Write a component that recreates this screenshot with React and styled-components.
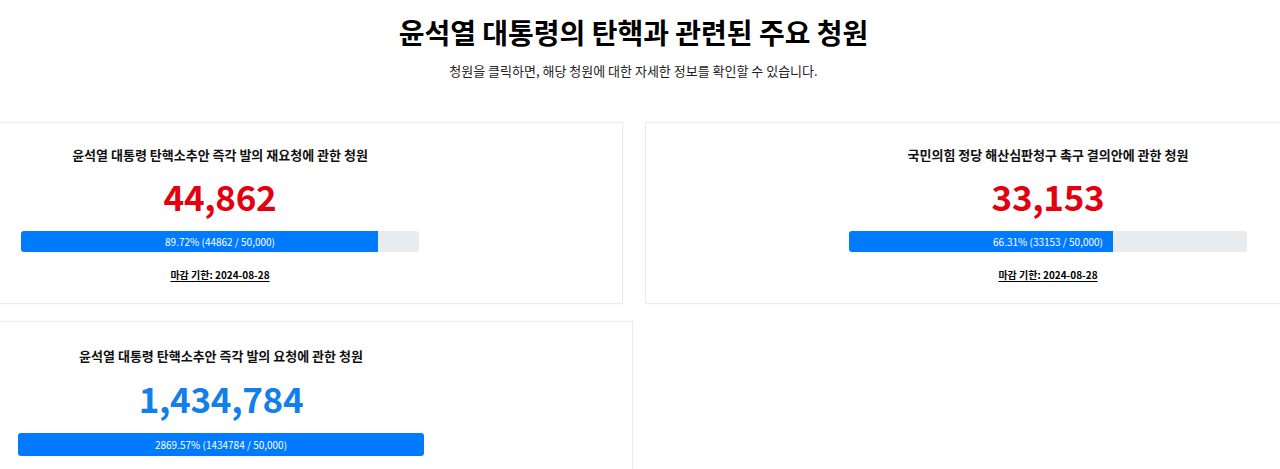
import React from 'react'
import styled, { createGlobalStyle } from 'styled-components'

const GOAL = 50000

const petitions = [
    { id: 1, title: '윤석열 대통령 탄핵소추안 즉각 발의 재요청에 관한 청원', count: 44862, deadline: '2024-08-28' },
    { id: 2, title: '국민의힘 정당 해산심판청구 촉구 결의안에 관한 청원', count: 33153, deadline: '2024-08-28' },
    { id: 3, title: '윤석열 대통령 탄핵소추안 즉각 발의 요청에 관한 청원', count: 1434784, deadline: '2024-08-14', wide: true },
]

const GlobalStyle = createGlobalStyle`
    body{
        margin: 0;
        background: #fff;
        overflow: hidden;
        font-family: "Noto Sans CJK KR", "Noto Sans", sans-serif;
        color: #111;
    }
`

function App() {
    return (
        <>
            <GlobalStyle />
            <PageStyled>
                <Header>
                    <h1>윤석열 대통령의 탄핵과 관련된 주요 청원</h1>
                    <p>청원을 클릭하면, 해당 청원에 대한 자세한 정보를 확인할 수 있습니다.</p>
                </Header>
                <CardGrid>
                    {petitions.map((p) => {
                        const percent = (p.count / GOAL) * 100
                        return (
                            <Card key={p.id} $wide={p.wide}>
                                <CardTitle>{p.title}</CardTitle>
                                <Count $done={p.count >= GOAL} $wide={p.wide}>
                                    {p.count.toLocaleString('en-US')}
                                </Count>
                                <Track $wide={p.wide}>
                                    <Fill style={{ width: `${Math.min(percent, 100)}%` }} />
                                    <Label>
                                        {percent.toFixed(2)}% ({p.count} / {GOAL.toLocaleString('en-US')})
                                    </Label>
                                </Track>
                                <Deadline href="#">마감 기한: {p.deadline}</Deadline>
                            </Card>
                        )
                    })}
                </CardGrid>
            </PageStyled>
        </>
    )
}

const PageStyled = styled.div`
    width: 1633px;
    margin-left: -183px;
`

const Header = styled.header`
    text-align: center;
    padding-top: 14px;
    h1{
        margin: 0;
        font-size: 28px;
        line-height: 36px;
        font-weight: 700;
        color: #000;
    }
    p{
        margin: 12px 0 0;
        font-size: 13px;
        line-height: 18px;
        color: #222;
    }
`

const CardGrid = styled.div`
    display: grid;
    grid-template-columns: 806px 806px;
    column-gap: 22px;
    row-gap: 17px;
    margin-top: 42px;
    align-items: start;
`

const Card = styled.div`
    box-sizing: border-box;
    width: ${(p) => (p.$wide ? '824px' : '806px')};
    margin-left: ${(p) => (p.$wide ? '-8px' : '0')};
    display: flex;
    flex-direction: column;
    align-items: center;
    padding: ${(p) => (p.$wide ? '25px' : '23px')} 0 21px;
    background: #fff;
    border: 1px solid #ececec;
    box-shadow: 0 0 3px rgba(0, 0, 0, 0.04);
`

const CardTitle = styled.h3`
    margin: 0;
    font-size: 13px;
    line-height: 18px;
    font-weight: 700;
    color: #111;
`

const Count = styled.div`
    margin-top: ${(p) => (p.$wide ? '11px' : '10px')};
    font-size: 35px;
    line-height: 44px;
    font-weight: 700;
    letter-spacing: -0.3px;
    color: ${(p) => (p.$done ? '#127fea' : '#e3000f')};
`

const Track = styled.div`
    margin-top: 13px;
    width: 49.5%;
    height: ${(p) => (p.$wide ? '23px' : '21px')};
    display: grid;
    background: #e9ecef;
    border-radius: 3px;
    overflow: hidden;
`

const Fill = styled.div`
    grid-area: 1 / 1;
    height: 100%;
    background: #007bff;
`

const Label = styled.span`
    grid-area: 1 / 1;
    align-self: center;
    text-align: center;
    font-size: 10px;
    line-height: 21px;
    color: #fff;
    z-index: 1;
`

const Deadline = styled.a`
    margin-top: 16px;
    font-size: 10px;
    line-height: 14px;
    font-weight: 600;
    color: #000;
    text-decoration: underline;
    text-underline-offset: 2px;
`

export default App
